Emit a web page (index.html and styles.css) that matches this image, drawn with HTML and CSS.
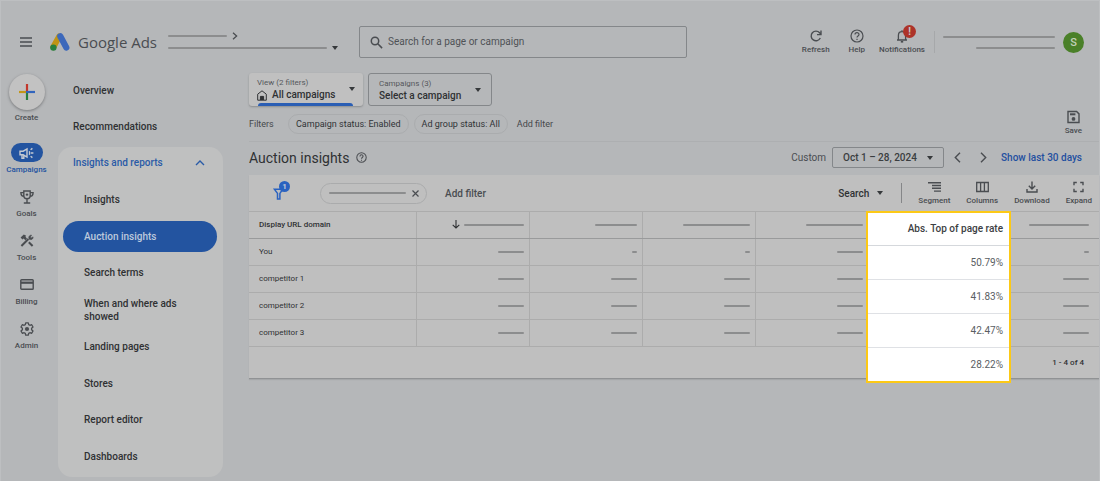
FILE: index.html
```html
<!DOCTYPE html>
<html lang="en">
<head>
<meta charset="utf-8">
<meta name="viewport" content="width=device-width, initial-scale=1">
<title>Auction insights - Google Ads</title>
<link rel="stylesheet" href="styles.css">
</head>
<body>
<div class="app">
  <header class="topbar">
    <button class="plain menu" aria-label="Menu"><svg width="12" height="10" viewBox="0 0 12 10" stroke="currentColor" stroke-width="1.4"><path d="M0 1h12M0 5h12M0 9h12"/></svg></button>
    <a class="brand" href="#">
      <svg width="20" height="18" viewBox="0 0 20 18" fill="none" stroke-linecap="round"><path d="M9.2 3.4 3.4 14" stroke="#bf9416" stroke-width="6"/><path d="M10.3 3.3l6 11.2" stroke="#3c68bb" stroke-width="6.2"/><circle cx="3.4" cy="14.6" r="3.2" fill="#277f40"/></svg>
      <span>Google Ads</span>
    </a>
    <div class="account">
      <div class="account-row"><i class="bar b59"></i><svg width="6" height="8" viewBox="0 0 6 8" fill="none" stroke="currentColor" stroke-width="1.3"><path d="M1 .8 4.6 4 1 7.2"/></svg></div>
      <div class="account-row"><i class="bar b159"></i><i class="caret"></i></div>
    </div>
    <label class="search">
      <svg width="13" height="13" viewBox="0 0 13 13" fill="none" stroke="currentColor" stroke-width="1.5"><circle cx="5" cy="5" r="3.7"/><path d="m7.8 7.8 4.3 4.3"/></svg>
      <input type="text" placeholder="Search for a page or campaign" aria-label="Search for a page or campaign">
    </label>
    <div class="actions">
      <button class="plain tool"><svg width="14" height="14" viewBox="0 0 14 14" fill="none" stroke="currentColor" stroke-width="1.4"><path d="M11.3 9A4.8 4.8 0 1 1 10.6 3.8L12 5.2M12 1.6v4H8"/></svg>Refresh</button>
      <button class="plain tool"><svg width="14" height="14" viewBox="0 0 14 14" fill="none" stroke="currentColor" stroke-width="1.2"><circle cx="7" cy="7" r="6"/><path d="M5 5.6C5 3 9 3 9 5.5 9 7 7 7 7 8.6M7 9.8v1.2"/></svg>Help</button>
      <button class="plain tool alerts"><svg width="14" height="14" viewBox="0 0 14 14" fill="none" stroke="currentColor" stroke-width="1.3"><path d="M2 11h10M3.4 11V6.4C3.4 1.4 10.6 1.4 10.6 6.4V11M7 1.2v1.6"/><path d="M5.8 12.8h2.4" stroke-width="1.6"/></svg><b class="alert-badge">!</b>Notifications</button>
      <div class="user-lines"><i class="bar b112"></i><i class="bar b79"></i></div>
      <button class="plain avatar">S</button>
    </div>
  </header>

  <div class="body">
    <nav class="rail" aria-label="Main">
      <a href="#" class="create"><span class="plus"><svg width="16" height="16" viewBox="0 0 16 16" stroke-width="2.2"><path d="M8 0v8" stroke="#c2372c"/><path d="M8 8v8" stroke="#27803e"/><path d="M0 8h7" stroke="#c39617"/><path d="M7 8h9" stroke="#3265bd"/></svg></span>Create</a>
      <a href="#" class="on"><span class="ico"><svg width="15" height="12" viewBox="0 0 15 12" fill="none" stroke="currentColor" stroke-width="1.4"><path d="M1 4.2h3.2L8 2v8L4.2 7.8H1zM3 8v3.2h1.8V8M10 4.4c1 .8 1 2.4 0 3.2M11.6 2.8l1.8-1.4M12 6h2.4M11.6 9.2l1.8 1.4"/></svg></span>Campaigns</a>
      <a href="#"><span class="ico"><svg width="14" height="14" viewBox="0 0 14 14" fill="none" stroke="currentColor" stroke-width="1.4"><path d="M3.8 1h6.4v4.6a3.2 3.2 0 0 1-6.4 0zM3.8 2.6H.9c0 2.6 1 3.8 3 3.8M10.2 2.6h2.9c0 2.6-1 3.8-3 3.8M7 9v4M3.8 13h6.4"/><path d="M7 3.4v2.4M5.8 4.6h2.4"/></svg></span>Goals</a>
      <a href="#"><span class="ico"><svg width="14" height="13" viewBox="0 0 14 13" fill="none" stroke="currentColor" stroke-width="2"><path d="m1.4 12 7-7M8.8 8.2l3.8 3.8"/><path d="M9.2 5.2C8 3 9.6.8 11.6 1.2L10.4 3l.8.9 1.9-1c.3 2-1.8 3.4-3.9 2.3z" fill="currentColor" stroke-width=".6"/><path d="M.6 3.6 3.8.6l2.4 1.2-.8.9L7 4.6 5.4 6.2 3.6 4.4 2.4 5.4z" fill="currentColor" stroke="none"/></svg></span>Tools</a>
      <a href="#"><span class="ico"><svg width="14" height="11" viewBox="0 0 14 11" fill="none" stroke="currentColor"><rect x=".8" y=".8" width="12.4" height="9.4" rx=".8" stroke-width="1.4"/><path d="M1 3.7h12" stroke-width="2.2"/></svg></span>Billing</a>
      <a href="#"><span class="ico"><svg width="14" height="14" viewBox="0 0 14 14" fill="none" stroke="currentColor" stroke-width="1.3" stroke-linejoin="round"><path d="M5.7.8h2.6l.4 1.8 1.2.7 1.8-.6L13 5l-1.4 1.3v1.4L13 9l-1.3 2.3-1.8-.6-1.2.7-.4 1.8H5.7l-.4-1.8-1.2-.7-1.8.6L1 9l1.4-1.3V6.3L1 5l1.3-2.3 1.8.6 1.2-.7z"/><circle cx="7" cy="7" r="2.1" fill="currentColor" stroke="none"/></svg></span>Admin</a>
    </nav>

    <nav class="side" aria-label="Section">
      <a href="#" class="top-link">Overview</a>
      <a href="#" class="top-link">Recommendations</a>
      <div class="group">
        <button class="plain group-head">Insights and reports<svg width="10" height="6" viewBox="0 0 10 6" fill="none" stroke="currentColor" stroke-width="1.4"><path d="m1 5 4-4 4 4"/></svg></button>
        <a href="#">Insights</a>
        <a href="#" class="current" aria-current="page">Auction insights</a>
        <a href="#">Search terms</a>
        <a href="#">When and where ads showed</a>
        <a href="#">Landing pages</a>
        <a href="#">Stores</a>
        <a href="#">Report editor</a>
        <a href="#">Dashboards</a>
      </div>
    </nav>

    <main class="main">
      <div class="pickers">
        <button class="plain picker view"><span><small>View (2 filters)</small><strong><svg width="10" height="11" viewBox="0 0 10 11" fill="none" stroke="currentColor" stroke-width="1"><path d="M.7 4.2 5 .8l4.3 3.4v6H.7z"/><path d="M3.4 10V6.4h3.2V10" fill="currentColor"/></svg>All campaigns</strong></span><i class="caret"></i></button>
        <button class="plain picker"><span><small>Campaigns (3)</small><strong>Select a campaign</strong></span><i class="caret"></i></button>
      </div>
      <div class="filters">
        <span class="filters-label">Filters</span>
        <button class="plain chip">Campaign status: Enabled</button>
        <button class="plain chip">Ad group status: All</button>
        <button class="plain add">Add filter</button>
        <button class="plain tool save"><svg width="13" height="13" viewBox="0 0 13 13" fill="none" stroke="currentColor" stroke-width="1.4"><path d="M1 1h8.6L12 3.4V12H1z"/><path d="M3 3.8h5.4" stroke-width="2"/><circle cx="6.5" cy="8.4" r="1.9" fill="currentColor" stroke="none"/></svg>Save</button>
      </div>
      <div class="heading">
        <h1>Auction insights</h1>
        <svg width="11" height="11" viewBox="0 0 14 14" fill="none" stroke="currentColor" stroke-width="1.3"><circle cx="7" cy="7" r="6"/><path d="M5 5.6C5 3 9 3 9 5.5 9 7 7 7 7 8.6M7 9.8v1.2"/></svg>
        <div class="range">
          <span>Custom</span>
          <button class="plain date">Oct 1 – 28, 2024<i class="caret"></i></button>
          <button class="plain step" aria-label="Previous"><svg width="7" height="11" viewBox="0 0 7 11" fill="none" stroke="currentColor" stroke-width="1.4"><path d="m6 .8-4.7 4.7L6 10.2"/></svg></button>
          <button class="plain step" aria-label="Next"><svg width="7" height="11" viewBox="0 0 7 11" fill="none" stroke="currentColor" stroke-width="1.4"><path d="m1 .8 4.7 4.7L1 10.2"/></svg></button>
          <a href="#">Show last 30 days</a>
        </div>
      </div>

      <section class="card">
        <div class="toolbar">
          <button class="plain funnel" aria-label="Filters, 1 applied"><svg width="12" height="13" viewBox="0 0 12 13" fill="none" stroke="currentColor" stroke-width="1.5"><path d="M1.4 2.2h8.4L6.9 6.4V12H4.5V6.4z"/></svg><b class="count">1</b></button>
          <button class="plain applied" aria-label="Remove filter"><i class="bar b77"></i><svg width="7" height="7" viewBox="0 0 7 7" stroke="currentColor" stroke-width="1.2"><path d="m.5.5 6 6M6.5.5l-6 6"/></svg></button>
          <button class="plain add-filter">Add filter</button>
          <div class="table-tools">
            <button class="plain find">Search<i class="caret"></i></button>
            <button class="plain tool"><svg width="13" height="11" viewBox="0 0 13 11" stroke="currentColor" stroke-width="1.4"><path d="M0 1.2h13M4 4h9M4 6.8h9M6 9.6h7"/></svg>Segment</button>
            <button class="plain tool"><svg width="13" height="11" viewBox="0 0 13 11" fill="none" stroke="currentColor" stroke-width="1.3"><path d="M.7 1h11.6v9H.7zM4.6 1v9M8.4 1v9"/></svg>Columns</button>
            <button class="plain tool"><svg width="12" height="12" viewBox="0 0 12 12" fill="none" stroke="currentColor" stroke-width="1.4"><path d="M6 .5v7M2.8 4.7 6 7.9l3.2-3.2M1 8v3h10V8"/></svg>Download</button>
            <button class="plain tool"><svg width="11" height="11" viewBox="0 0 11 11" fill="none" stroke="currentColor" stroke-width="1.4"><path d="M1 3.8V1h2.8M7.2 1H10v2.8M10 7.2V10H7.2M3.8 10H1V7.2"/></svg>Expand</button>
          </div>
        </div>
        <div class="grid">
          <table class="data">
            <colgroup><col class="c-name"><col class="c"><col class="c"><col class="c"><col class="c"><col class="c"><col></colgroup>
            <thead><tr><th>Display URL domain</th><th><svg width="8" height="9" viewBox="0 0 8 9" fill="none" stroke="currentColor" stroke-width="1.1"><path d="M4 0v8M.7 4.8 4 8l3.3-3.2"/></svg><i class="bar b60"></i></th><th><i class="bar b42"></i></th><th><i class="bar b67"></i></th><th><i class="bar b57"></i></th><th></th><th><i class="bar b60"></i></th></tr></thead>
            <tbody>
              <tr><td>You</td><td><i class="bar b26"></i></td><td><i class="bar b5"></i></td><td><i class="bar b5"></i></td><td><i class="bar b26"></i></td><td></td><td><i class="bar b5"></i></td></tr>
              <tr><td>competitor 1</td><td><i class="bar b26"></i></td><td><i class="bar b26"></i></td><td><i class="bar b26"></i></td><td><i class="bar b26"></i></td><td></td><td><i class="bar b26"></i></td></tr>
              <tr><td>competitor 2</td><td><i class="bar b26"></i></td><td><i class="bar b26"></i></td><td><i class="bar b26"></i></td><td><i class="bar b26"></i></td><td></td><td><i class="bar b26"></i></td></tr>
              <tr><td>competitor 3</td><td><i class="bar b26"></i></td><td><i class="bar b26"></i></td><td><i class="bar b26"></i></td><td><i class="bar b26"></i></td><td></td><td><i class="bar b26"></i></td></tr>
            </tbody>
          </table>
          <div class="pages">1 - 4 of 4</div>
          <table class="focus">
            <thead><tr><th>Abs. Top of page rate</th></tr></thead>
            <tbody><tr><td>50.79%</td></tr><tr><td>41.83%</td></tr><tr><td>42.47%</td></tr><tr><td>28.22%</td></tr></tbody>
          </table>
        </div>
      </section>
    </main>
  </div>
</div>
</body>
</html>
```
FILE: styles.css
```css
* { box-sizing: border-box; }
body {
  margin: 0;
  background: #b5b7b9;
  color: #2f3133;
  font: 500 10px/13px Roboto, "Liberation Sans", sans-serif;
}
a { color: inherit; text-decoration: none; }
svg { display: block; flex: none; overflow: visible; }
.plain { border: 0; margin: 0; padding: 0; background: none; font: inherit; color: inherit; cursor: pointer; }
.app { min-height: 100vh; display: flex; flex-direction: column; border: 1px solid #bdbfc1; border-bottom: 0; }

.bar { display: inline-block; height: 2px; border-radius: 1px; background: #8c8d8e; vertical-align: middle; }
.b5 { width: 5px; }
.b26 { width: 26px; }
.b42 { width: 42px; }
.b57 { width: 57px; }
.b59 { width: 59px; }
.b60 { width: 60px; }
.b67 { width: 67px; }
.b77 { width: 77px; }
.b79 { width: 79px; }
.b112 { width: 112px; }
.b159 { width: 159px; }
.caret { flex: none; border: 3px solid transparent; border-top: 4px solid #36393b; border-bottom: 0; }

.topbar { display: flex; align-items: center; height: 72px; padding: 10px 15px 0 19px; color: #4a4d51; }
.brand { display: flex; align-items: center; gap: 8px; margin-left: 18px; font: 400 15px/20px "Open Sans", Roboto, sans-serif; white-space: nowrap; }
.account { display: flex; flex-direction: column; gap: 4px; width: 172px; margin-left: 11px; }
.account-row { display: flex; align-items: center; gap: 5px; height: 8px; }
.search { display: flex; align-items: center; gap: 5px; flex: 0 1 328px; height: 32px; margin-left: 19px; padding: 0 10px; border: 1px solid #84878a; border-radius: 2px; }
.search input { flex: 1; min-width: 0; border: 0; padding: 0; background: none; outline: 0; font: 400 10px/14px Roboto, sans-serif; color: inherit; }
.search input::placeholder { color: #4f5256; opacity: 1; }
.actions { display: flex; align-items: center; margin-left: auto; }
.tool { position: relative; display: flex; flex-direction: column; align-items: center; gap: 1px; font-size: 8px; line-height: 12px; color: #4a4d51; }
.tool svg { height: 14px; }
.actions .tool + .tool { margin-left: 19px; }
.actions .tool.alerts { margin-left: 14px; }
.alert-badge { position: absolute; top: -4px; left: 24px; width: 13px; height: 13px; border-radius: 50%; background: #ad3329; color: #c8c8c8; font: 700 10px/13px Roboto, sans-serif; text-align: center; }
.user-lines { display: flex; flex-direction: column; align-items: flex-end; justify-content: center; gap: 9px; height: 22px; margin-left: 9px; padding-left: 8px; border-left: 1px solid #a6a8aa; }
.avatar { width: 21px; height: 21px; margin-left: 8px; border-radius: 50%; background: #4a8029; color: #c3d0ba; font-size: 11px; }

.body { display: flex; flex: 1; }
.rail { flex: none; display: flex; flex-direction: column; width: 51px; font-size: 8px; line-height: 12px; color: #4a4d51; }
.rail a { display: flex; flex-direction: column; align-items: center; gap: 2px; height: 44px; white-space: nowrap; }
.rail .create { height: 70px; }
.plus { display: grid; place-items: center; flex: none; width: 36px; height: 36px; margin-top: 1px; border-radius: 50%; background: #c2c2c2; box-shadow: 0 1px 3px #77797b; }
.ico { display: grid; place-items: center; flex: none; width: 32px; height: 19px; border-radius: 10px; }
.rail .on { color: #2354a0; }
.on .ico { background: #2354a0; color: #c5cad2; }

.side { flex: none; display: flex; flex-direction: column; width: 165px; margin-left: 6px; padding-bottom: 4px; }
.top-link { padding: 11px 15px 12px; }
.group { flex: 1; display: flex; flex-direction: column; justify-content: space-between; gap: 5px; margin-top: 2px; padding: 0 6px 5px 5px; border-radius: 14px; background: #bfc0c0; }
.group-head { display: flex; align-items: center; justify-content: space-between; min-height: 31px; padding: 0 12px 0 10px; color: #2a5ba7; }
.group a { display: flex; align-items: center; min-height: 31px; padding: 0 30px 0 21px; border-radius: 16px; }
.group .current { background: #2354a0; color: #bdc9dc; }

.main { flex: 1; min-width: 0; display: flex; flex-direction: column; margin-left: 26px; }
.pickers { display: flex; gap: 5px; }
.picker { display: flex; align-items: center; justify-content: space-between; width: 124px; height: 33px; padding: 0 10px; border: 1px solid #84878a; border-radius: 3px; text-align: left; }
.picker small, .picker strong { display: flex; align-items: center; gap: 5px; font: 400 8px/12px Roboto, sans-serif; color: #55585c; }
.picker strong { font-weight: 500; font-size: 10px; color: #2f3133; }
.view { position: relative; width: 114px; padding: 0 8px 1px; border: 0; background: #c0c0c0; box-shadow: 0 1px 2px #8b8d8f; }
.view::after { content: ""; position: absolute; left: 9px; right: 10px; bottom: 0; height: 3px; border-radius: 3px 3px 0 0; background: #2a5eb4; }
.filters { display: flex; align-items: center; gap: 5px; height: 36px; padding-right: 17px; border-bottom: 1px solid #adafb1; font-size: 9px; line-height: 12px; color: #45484b; }
.filters-label { width: 34px; font-weight: 400; }
.chip { height: 20px; padding: 0 7px; border: 1px solid #aaacae; border-radius: 10px; font-weight: 400; color: #303336; }
.add { margin-left: 4px; font-weight: 400; }
.save { margin-left: auto; }
.heading { display: flex; align-items: center; gap: 7px; height: 33px; padding: 0 17px 2px 0; color: #4a4d51; }
h1 { margin: 0; font: 400 14px/20px Roboto, sans-serif; color: #2f3133; }
.range { display: flex; align-items: center; margin-left: auto; }
.range span { font-weight: 400; }
.date { display: flex; align-items: center; justify-content: space-between; width: 112px; height: 21px; margin: 0 10px 0 6px; padding: 0 10px; border: 1px solid #84878a; border-radius: 2px; color: #3a3d40; }
.step { width: 7px; margin-right: 19px; }
.step + .step { margin-right: 14px; }
.range a { color: #1f4fa0; }

.card { background: #bfbfbf; border-bottom: 1px solid #909294; box-shadow: 0 1px 1px #a5a7a9; }
.toolbar { display: flex; align-items: center; height: 36px; padding: 0 7px 0 24px; }
.funnel { position: relative; width: 12px; color: #2a62c0; }
.count { position: absolute; top: -6px; left: 6px; width: 11px; height: 11px; border-radius: 50%; background: #2a62c0; color: #c2cad8; font: 700 8px/11px Roboto, sans-serif; text-align: center; }
.applied { display: flex; align-items: center; justify-content: space-between; width: 107px; height: 21px; margin-left: 35px; padding: 0 7px 0 8px; border: 1px solid #aaabac; border-radius: 11px; color: #4a4d51; }
.add-filter { margin-left: 18px; color: #4a4d51; }
.table-tools { display: flex; align-items: center; gap: 16px; margin-left: auto; }
.find { display: flex; align-items: center; gap: 8px; height: 20px; padding-right: 18px; border-right: 1px solid #858688; }
.grid { position: relative; }
table { border-collapse: collapse; }
.data { width: 100%; table-layout: fixed; font-size: 8px; line-height: 12px; }
.c-name { width: 167px; }
.c { width: 113px; }
.data th, .data td { height: 27px; padding: 0 5px; border: 1px solid #acacac; border-left: 0; text-align: right; font-weight: 400; }
.data th { border-bottom-color: #999a9b; font-weight: 500; }
.data th svg { display: inline-block; margin-right: 4px; vertical-align: middle; }
.data tr > :first-child { padding-left: 10px; text-align: left; }
.data tr > :last-child { border-right: 0; padding-right: 10px; }
.pages { padding: 10px 15px 9px; font-size: 8px; line-height: 12px; text-align: right; }
.focus { position: absolute; top: 0; right: 88px; width: 145px; border: 2px solid #fcc916; border-collapse: separate; border-spacing: 0; background: #fff; line-height: 12px; color: #5a5e63; }
.focus th, .focus td { height: 34px; padding: 0 6px; border-bottom: 1px solid #dfe1e5; text-align: right; font-weight: 400; }
.focus th { height: 33px; border-bottom-color: #d5d8dc; font-weight: 500; color: #3c4043; }
.focus tr:last-child td { height: 33px; border-bottom: 0; }
```
